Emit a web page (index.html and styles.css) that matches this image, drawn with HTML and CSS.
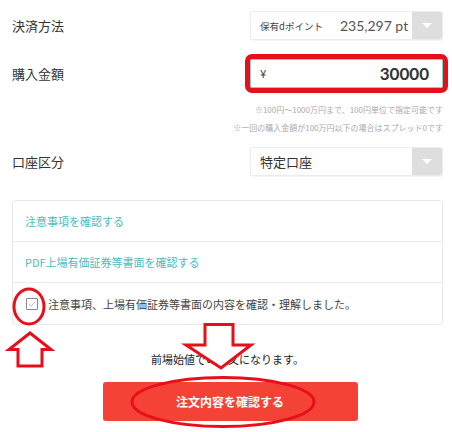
FILE: index.html
```html
<!DOCTYPE html>
<html lang="ja">
<head>
<meta charset="utf-8">
<link rel="stylesheet" href="styles.css">
</head>
<body>
<div class="page">
  <div class="row row-pay">
    <div class="label">決済方法</div>
    <div class="select">
      <div class="select-value"><span class="pt-label">保有dポイント</span><span class="pt-num">235,297 pt</span></div>
      <div class="select-btn"><span class="caret"></span></div>
    </div>
  </div>
  <div class="row row-amount">
    <div class="label">購入金額</div>
    <div class="input hl">
      <span class="yen">¥</span><span class="amount">30000</span>
    </div>
  </div>
  <div class="notes">
    <p>※100円〜1000万円まで、100円単位で指定可能です</p>
    <p>※一回の購入金額が100万円以下の場合はスプレッド0です</p>
  </div>
  <div class="row row-account">
    <div class="label">口座区分</div>
    <div class="select">
      <div class="select-value"><span class="acct">特定口座</span></div>
      <div class="select-btn"><span class="caret"></span></div>
    </div>
  </div>
  <div class="confirm-box">
    <div class="cb-row"><a class="link">注意事項を確認する</a></div>
    <div class="cb-row"><a class="link">PDF上場有価証券等書面を確認する</a></div>
    <div class="cb-row cb-check">
      <span class="checkbox">
        <svg width="10" height="10" viewBox="0 0 10 10"><path d="M2 5.2 L4.2 7.3 L8 2.8" fill="none" stroke="#bbb" stroke-width="1"/></svg>
      </span>
      <span class="check-text">注意事項、上場有価証券等書面の内容を確認・理解しました。</span>
    </div>
  </div>
  <p class="notice">前場始値での注文になります。</p>
  <div class="btn-wrap"><button class="btn">注文内容を確認する</button></div>

  <svg class="annot" width="452" height="432" viewBox="0 0 452 432">
    <g fill="none" stroke="#e60f1a" stroke-width="3" stroke-linejoin="miter">
      <ellipse cx="29" cy="306.5" rx="15" ry="17.5"/>
      <polygon points="30,333 9,349.5 18,349.5 18,366 42,366 42,349.5 51,349.5" fill="#fff"/>
      <polygon points="205,324.5 233,324.5 233,345 251,345 221,368 186,345 205,345" fill="#fff"/>
      <ellipse cx="223" cy="402" rx="91" ry="24.5"/>
    </g>
  </svg>
</div>
</body>
</html>
```

FILE: styles.css
```css
* { box-sizing: border-box; }
html, body { margin: 0; padding: 0; background: #fff; }
body {
  font-family: "Lato", "Noto Sans CJK JP", sans-serif;
  color: #333;
  width: 452px;
  height: 432px;
  overflow: hidden;
}
.page {
  position: relative;
  padding: 11px 9px 0 12px;
  height: 432px;
}
.row {
  display: flex;
  justify-content: space-between;
  align-items: center;
}
.label {
  font-family: "Noto Sans CJK JP", sans-serif;
  font-size: 13px;
  color: #333;
}
.select {
  width: 193px;
  height: 29px;
  display: flex;
  border: 1px solid #ececec;
  border-radius: 3px;
  overflow: hidden;
  background: #fff;
  box-shadow: 0 1px 1px rgba(0,0,0,0.04);
}
.select-value {
  flex: 1;
  display: flex;
  align-items: center;
  padding-left: 9px;
}
.select-btn {
  width: 30px;
  background: #dedede;
  display: flex;
  align-items: center;
  justify-content: center;
}
.caret {
  width: 0;
  height: 0;
  border-left: 5px solid transparent;
  border-right: 5px solid transparent;
  border-top: 5px solid #fff;
}
.pt-label {
  font-family: "Noto Sans CJK JP", sans-serif;
  font-size: 9.5px;
  color: #444;
}
.pt-num {
  margin-left: 17px;
  font-size: 14px;
  color: #555;
}
.acct {
  font-family: "Noto Sans CJK JP", sans-serif;
  font-size: 13px;
  color: #333;
}
.row-amount { margin-top: 19px; }
.input {
  width: 193px;
  height: 29px;
  border: 1px solid #86d0d0;
  border-radius: 2px;
  display: flex;
  align-items: center;
  justify-content: space-between;
  padding: 0 13px 0 9px;
}
.hl { outline: 5px solid #e60f1a; }
.yen { font-size: 11px; color: #444; }
.amount { font-size: 17px; font-weight: 700; color: #333; }
.notes {
  margin-top: 13px;
  text-align: right;
  font-family: "Noto Sans CJK JP", sans-serif;
  font-size: 8px;
  color: #aaa;
}
.notes p { margin: 0; line-height: 18px; }
.row-account { margin-top: 10px; }
.confirm-box {
  margin-top: 24px;
  border: 1px solid #e8e8e8;
  border-radius: 4px;
  font-family: "Noto Sans CJK JP", sans-serif;
  font-size: 11px;
}
.cb-row {
  height: 41px;
  display: flex;
  align-items: center;
  padding-left: 12px;
  border-top: 1px solid #ececec;
}
.cb-row:first-child { border-top: none; height: 40px; }
.link { color: #4cbcc0; }
.cb-check { height: 42px; }
.checkbox {
  width: 12px;
  height: 12px;
  border: 1px solid #888;
  border-radius: 1px;
  display: flex;
  align-items: center;
  justify-content: center;
  margin-left: 1px;
}
.check-text { margin-left: 10px; color: #444; }
.notice {
  margin: 26px 0 0;
  text-align: center;
  font-family: "Noto Sans CJK JP", sans-serif;
  font-size: 11px;
  line-height: 16px;
  color: #222;
}
.btn-wrap {
  margin-top: 15px;
  display: flex;
  justify-content: center;
}
.btn {
  width: 255px;
  height: 39px;
  border: none;
  border-radius: 3px;
  background: #f44336;
  color: #fff;
  font-family: "Noto Sans CJK JP", sans-serif;
  font-weight: 700;
  font-size: 12px;
  margin-left: 5px;
}
.annot {
  position: absolute;
  left: 0;
  top: 0;
  pointer-events: none;
}
```
